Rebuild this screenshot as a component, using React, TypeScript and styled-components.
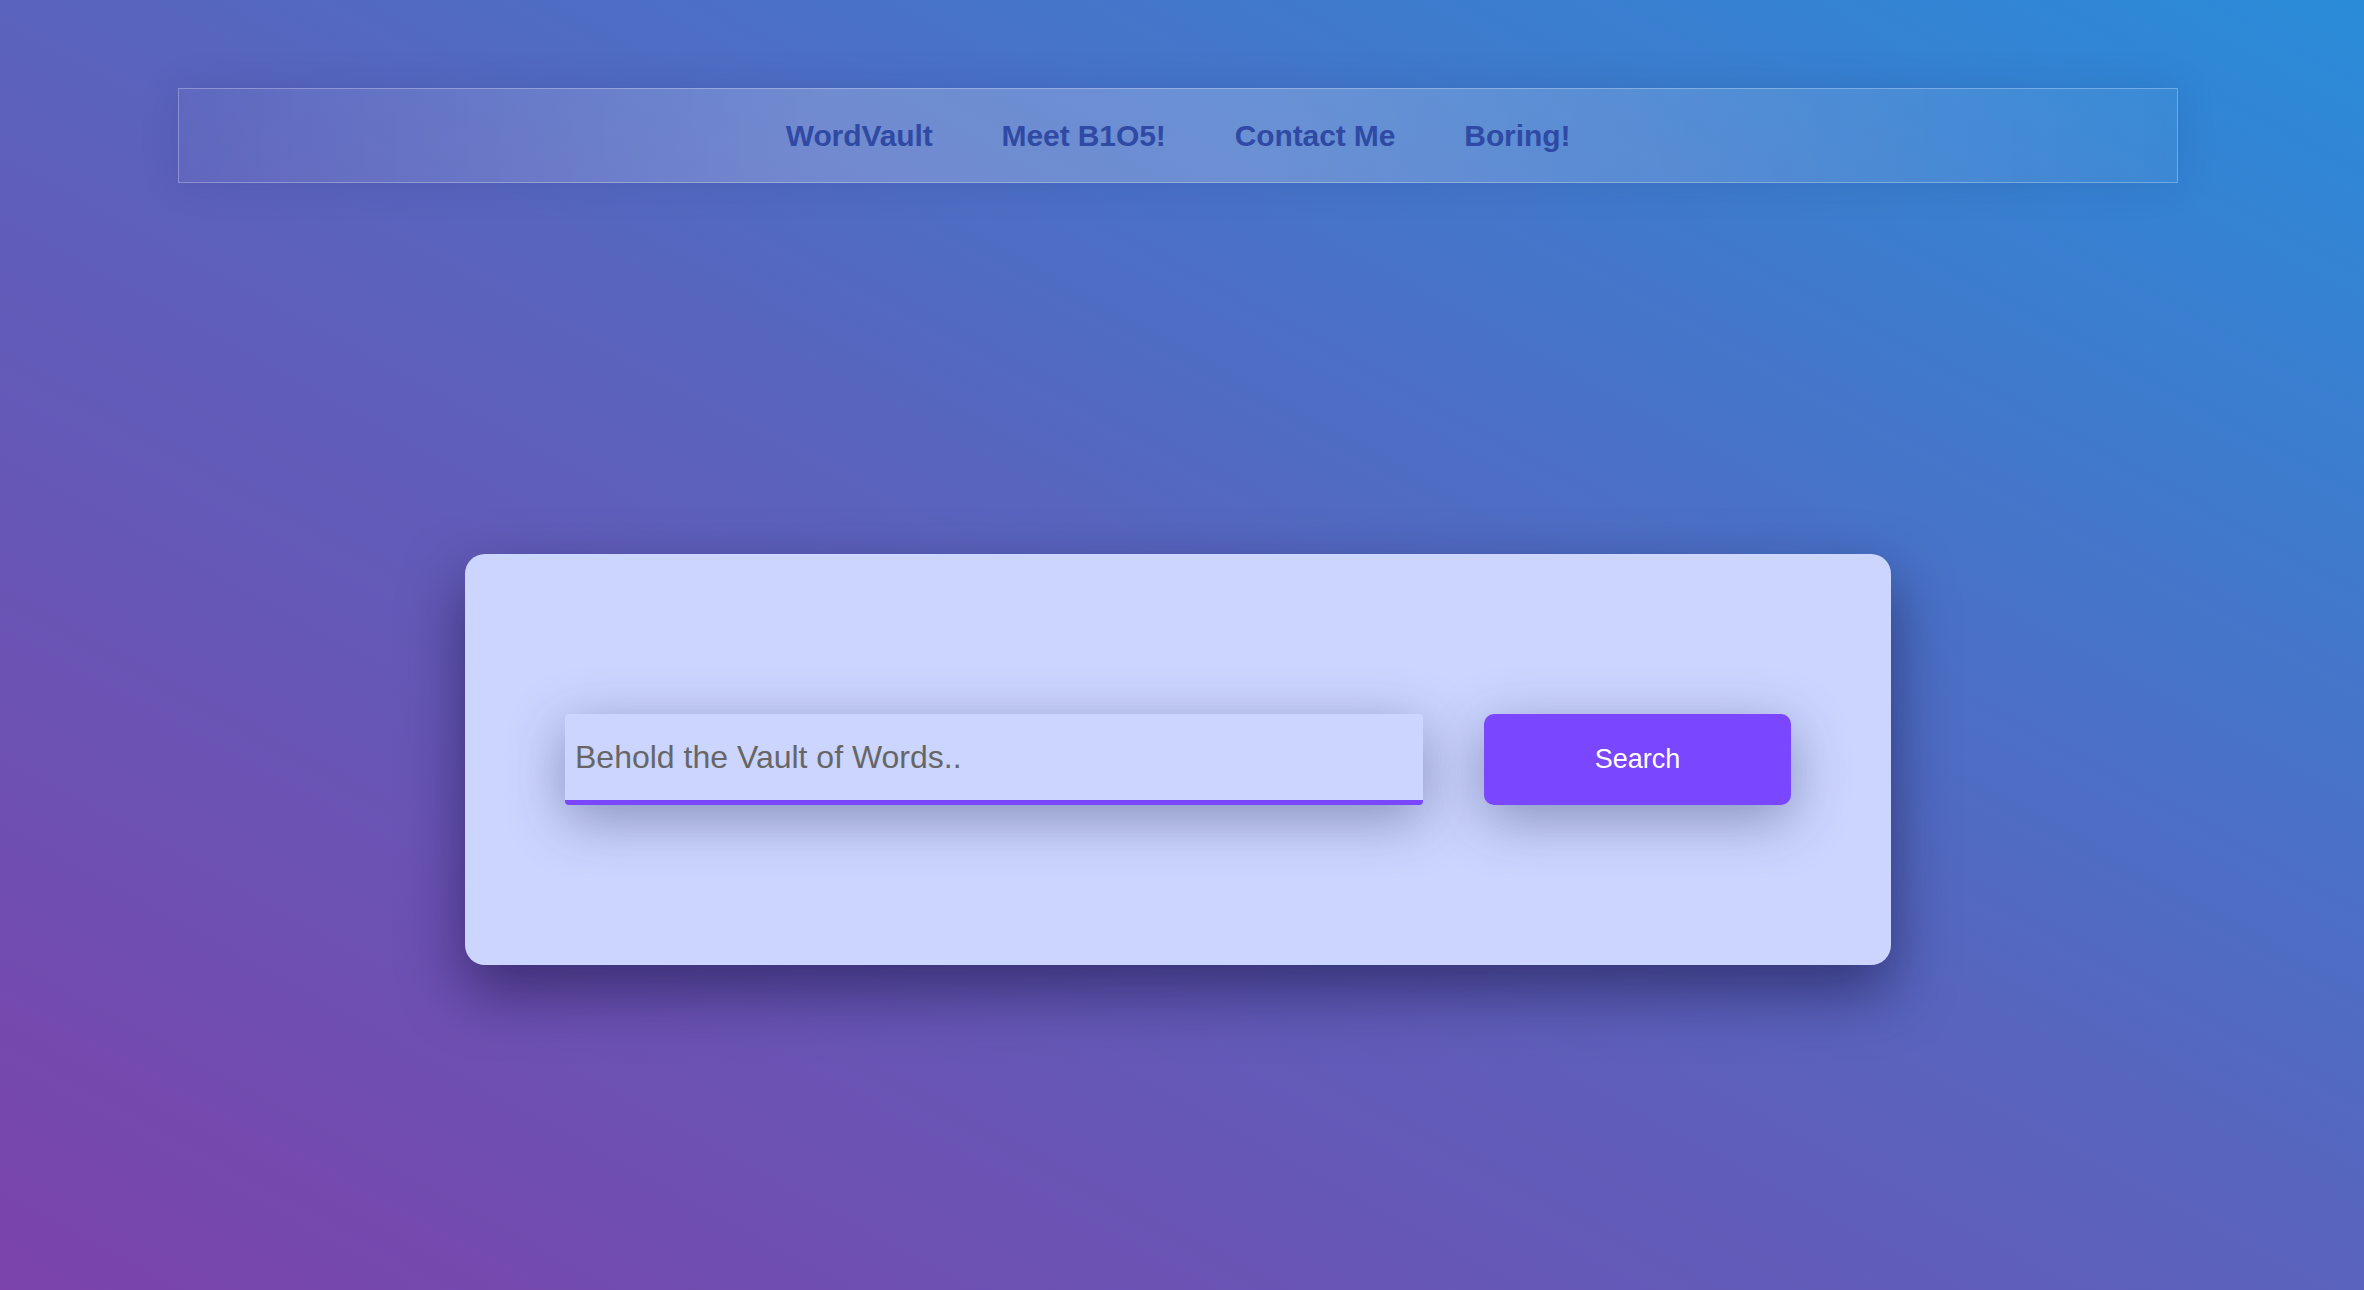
import React from "react";
import styled, { createGlobalStyle } from "styled-components";

const GlobalStyle = createGlobalStyle`
  html, body {
    margin: 0;
    padding: 0;
    height: 100%;
  }
  body {
    font-family: "Liberation Sans", Arial, sans-serif;
    background: linear-gradient(to top right, #7b43ab 0%, #5a63bd 50%, #2a8cd9 100%);
    background-attachment: fixed;
    overflow: hidden;
  }
  #root {
    min-height: 100%;
  }
`;

const Page = styled.div`
  min-height: 1290px;
  display: flex;
  flex-direction: column;
  align-items: center;
  padding: 88px 8px 0 0;
  box-sizing: border-box;
`;

const NavBar = styled.nav`
  width: 2000px;
  height: 95px;
  box-sizing: border-box;
  display: flex;
  align-items: center;
  justify-content: center;
  gap: 69px;
  border: 1px solid rgba(255, 255, 255, 0.28);
  background: linear-gradient(
    90deg,
    rgba(255, 255, 255, 0.03) 0%,
    rgba(255, 255, 255, 0.2) 32%,
    rgba(255, 255, 255, 0.2) 55%,
    rgba(255, 255, 255, 0.04) 100%
  );
  box-shadow: 0 0 40px rgba(20, 30, 90, 0.12);
`;

const NavLink = styled.a`
  font-family: "Liberation Sans", Arial, sans-serif;
  font-weight: 700;
  font-size: 30px;
  color: #2f4aa4;
  text-decoration: none;
  cursor: pointer;
  letter-spacing: -0.1px;
`;

const Card = styled.section`
  margin-top: 371px;
  width: 1426px;
  height: 411px;
  box-sizing: border-box;
  padding: 160px 100px;
  background: #ccd5fe;
  border-radius: 20px;
  box-shadow: 0 26px 60px rgba(20, 15, 60, 0.55);
  display: flex;
  align-items: stretch;
  gap: 61px;
`;

const SearchInput = styled.input`
  flex: 1;
  height: 91px;
  box-sizing: border-box;
  border: none;
  border-bottom: 5px solid #7b46ff;
  border-radius: 4px;
  background: #ccd5fe;
  padding: 0 10px;
  font-family: "Liberation Sans", Arial, sans-serif;
  font-size: 32px;
  color: #333;
  outline: none;
  box-shadow: 0 14px 55px rgba(40, 50, 100, 0.42);
  &::placeholder {
    color: #666666;
  }
`;

const SearchButton = styled.button`
  width: 307px;
  height: 91px;
  border: none;
  border-radius: 10px;
  background: #7b46ff;
  color: #ffffff;
  font-family: "Liberation Sans", Arial, sans-serif;
  font-size: 27px;
  cursor: pointer;
  box-shadow: 0 14px 55px rgba(40, 50, 100, 0.42);
`;

const links = ["WordVault", "Meet B1O5!", "Contact Me", "Boring!"];

export default function App() {
  return (
    <>
      <GlobalStyle />
      <Page>
        <NavBar>
          {links.map((l) => (
            <NavLink key={l}>{l}</NavLink>
          ))}
        </NavBar>
        <Card>
          <SearchInput placeholder="Behold the Vault of Words.." />
          <SearchButton>Search</SearchButton>
        </Card>
      </Page>
    </>
  );
}
